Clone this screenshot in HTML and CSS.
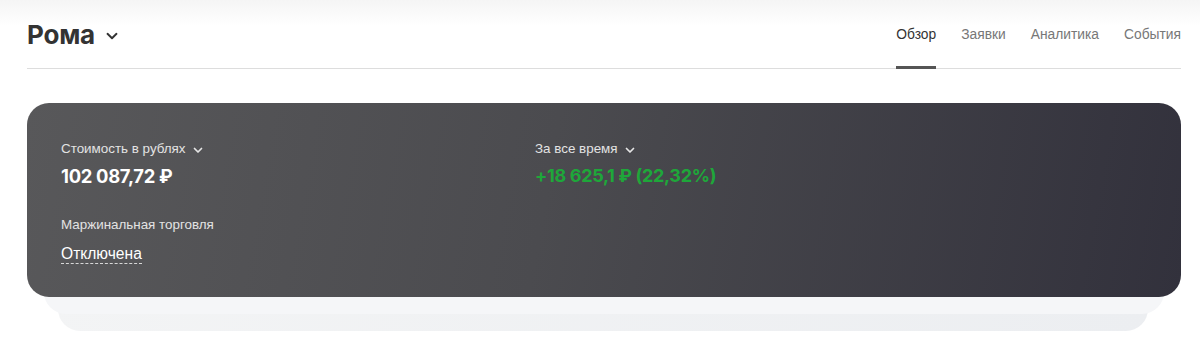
FILE: index.html
```html
<!DOCTYPE html>
<html lang="ru">
<head>
<meta charset="utf-8">
<link rel="stylesheet" href="styles.css">
</head>
<body>
<div class="page">
  <header class="head">
    <div class="title">
      <h1>Рома</h1>
      <svg class="chev-big" width="14" height="14" viewBox="0 0 14 14"><path d="M2.5 4.8 L7 9.2 L11.5 4.8" fill="none" stroke="#333" stroke-width="1.9" stroke-linecap="round" stroke-linejoin="round"/></svg>
    </div>
    <nav class="tabs">
      <a class="tab active">Обзор</a>
      <a class="tab">Заявки</a>
      <a class="tab">Аналитика</a>
      <a class="tab">События</a>
    </nav>
  </header>

  <section class="card-wrap">
    <div class="card">
      <div class="row">
        <div class="col">
          <div class="label">Стоимость в рублях
            <svg class="chev" width="12" height="12" viewBox="0 0 12 12"><path d="M2.5 4.5 L6 8 L9.5 4.5" fill="none" stroke="#e6e6e6" stroke-width="1.7" stroke-linecap="round" stroke-linejoin="round"/></svg>
          </div>
          <div class="value">102 087,72 ₽</div>
        </div>
        <div class="col">
          <div class="label">За все время
            <svg class="chev" width="12" height="12" viewBox="0 0 12 12"><path d="M2.5 4.5 L6 8 L9.5 4.5" fill="none" stroke="#e6e6e6" stroke-width="1.7" stroke-linecap="round" stroke-linejoin="round"/></svg>
          </div>
          <div class="value green">+18 625,1 ₽ (22,32%)</div>
        </div>
      </div>
      <div class="margin">
        <div class="label">Маржинальная торговля</div>
        <div class="status">Отключена</div>
      </div>
    </div>
  </section>
</div>
</body>
</html>
```
FILE: styles.css
```css
* { box-sizing: border-box; }
html, body { margin: 0; padding: 0; }
body {
  width: 1200px;
  height: 343px;
  overflow: hidden;
  background: linear-gradient(to bottom, #f5f5f5 0px, #ffffff 26px, #ffffff 100%);
  font-family: "Liberation Sans", Arial, sans-serif;
  color: #333;
}
.page {
  padding: 0 19px 0 27px;
}
.head {
  display: flex;
  justify-content: space-between;
  align-items: stretch;
  height: 69px;
  border-bottom: 1px solid #dddddd;
}
.title {
  display: flex;
  align-items: center;
  gap: 10px;
}
.title h1 {
  margin: 0;
  font-family: "Inter", "Noto Sans", sans-serif;
  font-size: 26px;
  font-weight: 700;
  color: #333333;
  letter-spacing: -0.2px;
}
.chev-big { margin-top: 3px; }
.tabs {
  display: flex;
  gap: 25px;
}
.tab {
  display: flex;
  align-items: center;
  padding-top: 2px;
  font-size: 13.8px;
  color: #777;
  border-bottom: 3px solid transparent;
  margin-bottom: -1px;
}
.tab.active {
  color: #333;
  border-bottom-color: #555;
}
.card-wrap {
  position: relative;
  margin-top: 34px;
}
.card-wrap::before,
.card-wrap::after {
  content: "";
  position: absolute;
  border-radius: 22px;
  z-index: 0;
}
.card-wrap::before {
  left: 17px;
  right: 17px;
  top: 40px;
  bottom: -17px;
  background: #f5f6f8;
}
.card-wrap::after {
  left: 31px;
  right: 33px;
  top: 60px;
  bottom: -34px;
  background: linear-gradient(100deg, #f3f4f5, #eceef1);
  z-index: -1;
}
.card {
  position: relative;
  z-index: 1;
  height: 194px;
  border-radius: 22px;
  background: linear-gradient(100deg, #58585a 0%, #4b4b4f 45%, #32313c 100%);
  padding: 37px 34px 0 34px;
  color: #fff;
}
.row {
  display: flex;
}
.col { width: 474px; }
.label {
  display: flex;
  align-items: center;
  gap: 6px;
  font-size: 13.4px;
  color: #e3e3e3;
  line-height: 18px;
}
.chev { margin-top: 1px; }
.value {
  margin-top: 7px;
  font-family: "Inter", "Noto Sans", sans-serif;
  font-size: 18.4px;
  font-weight: 700;
  line-height: 22px;
  letter-spacing: -0.3px;
  color: #ffffff;
}
.value.green { color: #1ea73a; font-size: 18px; }
.margin {
  margin-top: 29px;
}
.status {
  display: inline-block;
  margin-top: 10px;
  font-size: 15.6px;
  line-height: 19px;
  color: #ffffff;
  border-bottom: 1px dashed #d8d8d8;
}
```
